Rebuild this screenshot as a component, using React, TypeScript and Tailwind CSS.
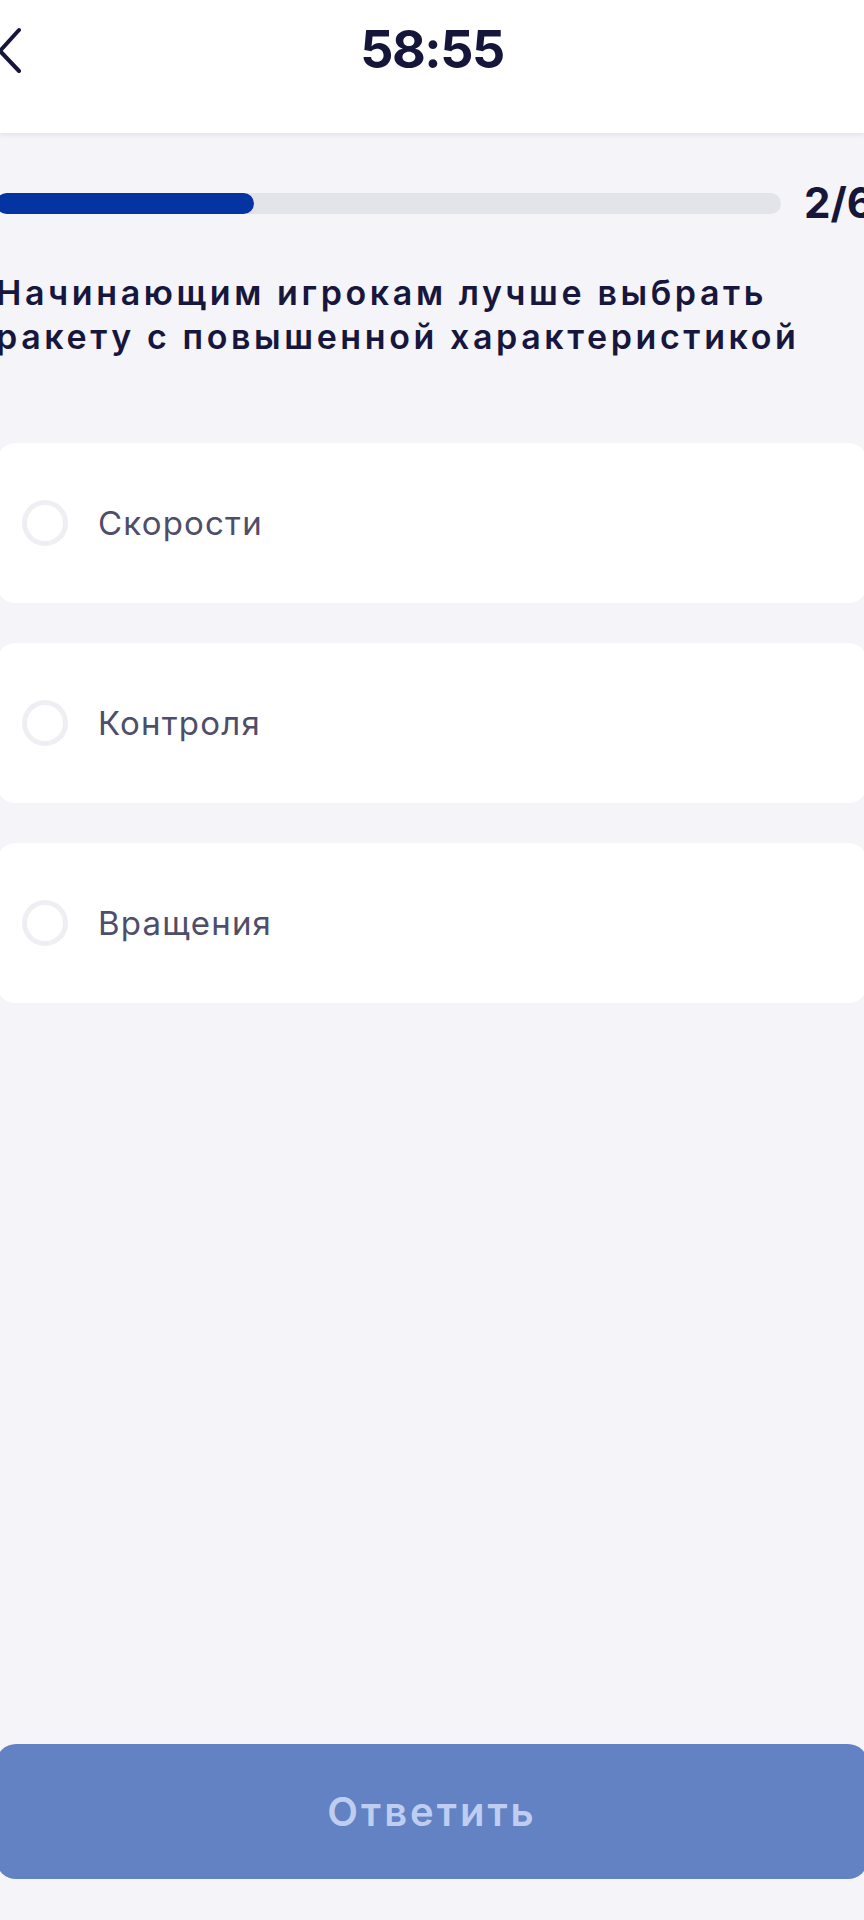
import { useState } from "react";

const options = ["Скорости", "Контроля", "Вращения"];

// Quiz question screen
export default function App() {
  const [selected, setSelected] = useState<number | null>(null);
  const current = 2;
  const total = 6;

  return (
    <div
      className="flex min-h-screen w-full flex-col overflow-hidden bg-[#f4f4f9] text-[#17173d]"
      style={{ fontFamily: "Inter, 'Noto Sans', sans-serif" }}
    >
      <header className="h-[133px] bg-white shadow-[0_2px_5px_rgba(20,20,60,0.08)]">
        <div className="grid h-[100px] grid-cols-[1fr_auto_1fr] items-center">
          <button className="-ml-[3px] flex h-[48px] w-[30px] items-center" aria-label="Назад">
            <svg width="26" height="48" viewBox="0 0 26 48" fill="none">
              <path
                d="M22 4 L3 25 L22 45"
                stroke="#16163a"
                strokeWidth="4"
                strokeLinecap="round"
                strokeLinejoin="round"
              />
            </svg>
          </button>
          <div className="text-[52px] leading-none font-bold tracking-[-1.5px] text-[#16163a]">58:55</div>
          <div />
        </div>
      </header>

      <main className="-mx-1 flex flex-1 flex-col">
        {/* progress */}
        <div className="mt-[49px] flex h-[42px] items-center gap-[23px]">
          <div className="h-[21px] flex-1 overflow-hidden rounded-full bg-[#e3e4ea]">
            <div
              className="h-full rounded-full bg-[#0334a1]"
              style={{ width: `${(current / total) * 100 - 0.5}%` }}
            />
          </div>
          <div className="w-[64px] text-[42px] leading-none font-bold text-[#16163a]">
            {current}/{total}
          </div>
        </div>

        <h1 className="mt-[47px] pr-[40px] text-[34px] leading-[44px] font-semibold tracking-[3.6px] text-[#17173d]">
          Начинающим игрокам лучше выбрать ракету с повышенной характеристикой
        </h1>

        <div className="mt-[84px] flex flex-col gap-[40px]">
          {options.map((o, i) => (
            <button
              key={o}
              onClick={() => setSelected(i)}
              className="flex h-[160px] items-center gap-[30px] rounded-[20px] bg-white pl-[26px] text-left"
            >
              <span
                className={
                  selected === i
                    ? "h-[46px] w-[46px] rounded-full border-[14px] border-[#0334a1]"
                    : "h-[46px] w-[46px] rounded-full border-[5px] border-[#efeff3]"
                }
              />
              <span className="text-[33px] leading-none font-normal tracking-[1.2px] text-[#4e4e6a]">{o}</span>
            </button>
          ))}
        </div>

        <div className="flex-1" />

        <div className="pb-[41px]">
          <button
            disabled={selected === null}
            className="flex h-[135px] w-full items-center justify-center rounded-[20px] bg-[#6282c4] text-[40px] font-semibold tracking-[3px] text-[#bfcef0]"
          >
            Ответить
          </button>
        </div>
      </main>
    </div>
  );
}
